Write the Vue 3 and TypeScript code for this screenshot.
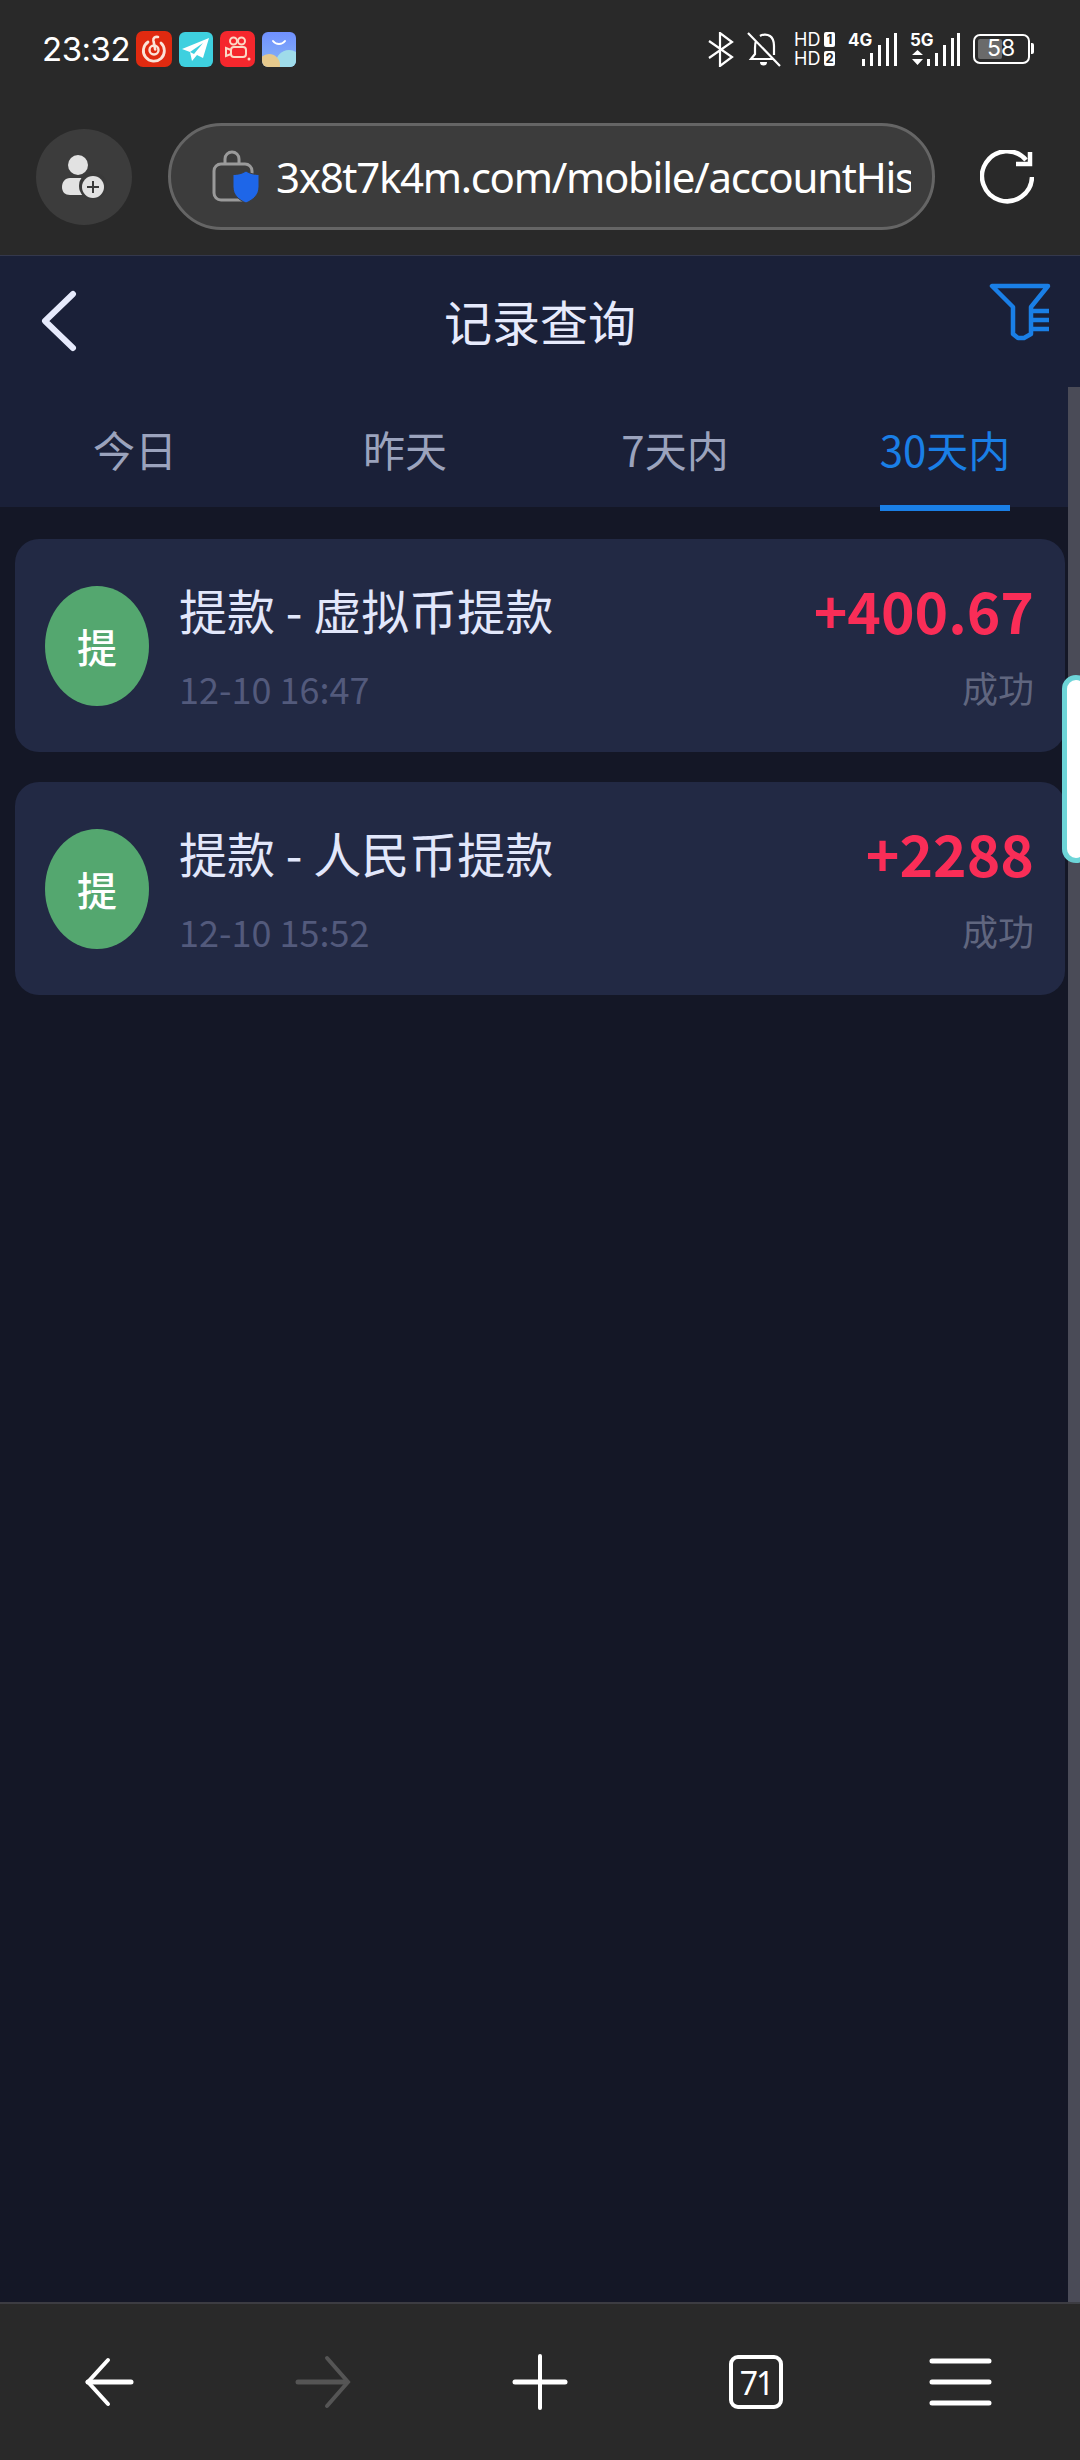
<template>
  <div class="page">
    <div class="chrome">
      <div class="status">
        <span class="time">23:32</span>
        <div class="apps">
          <svg width="36" height="36" viewBox="0 0 36 36">
            <rect width="36" height="36" rx="7" fill="#e02a10" />
            <path d="M22 6c-3-.6-5 1-4.600 3.500l1.800 9" fill="none" stroke="#fbe4d8" stroke-width="2.600" stroke-linecap="round" />
            <path d="M12 11a10.500 10.500 0 1 0 13 1" fill="none" stroke="#fbe4d8" stroke-width="2.800" stroke-linecap="round" />
            <circle cx="18" cy="19" r="4.500" fill="none" stroke="#fbe4d8" stroke-width="2.400" />
          </svg>
          <svg width="34" height="35" viewBox="0 0 34 35">
            <rect width="34" height="35" rx="6" fill="#3ed0df" />
            <path d="M30 6 3 17l8 3 2 9 5-6 6 3z" fill="#fff" />
            <path d="M11 20 24 11l-9 11z" fill="#3ed0df" />
          </svg>
          <svg width="35" height="36" viewBox="0 0 35 36">
            <rect width="35" height="36" rx="7" fill="#f5272d" />
            <g fill="none" stroke="#fbd9c6" stroke-width="2">
              <circle cx="13.500" cy="10" r="3.500" />
              <circle cx="21.500" cy="10" r="3.500" />
              <rect x="11" y="16" width="15" height="10" rx="3" />
              <path d="M11 19 6 17v8l5-2" />
            </g>
            <circle cx="29" cy="28" r="1.500" fill="#fbd9c6" />
          </svg>
          <svg width="34" height="35" viewBox="0 0 34 35">
            <defs>
              <linearGradient id="shopSky" x1="0" y1="0" x2="0" y2="1">
                <stop offset="0" stop-color="#7090ff" />
                <stop offset="1" stop-color="#86b4f5" />
              </linearGradient>
            </defs>
            <clipPath id="shopClip"><rect width="34" height="35" rx="6" /></clipPath>
            <g clip-path="url(#shopClip)">
              <rect width="34" height="35" fill="url(#shopSky)" />
              <circle cx="27" cy="31" r="13" fill="#9fdcea" />
              <circle cx="7" cy="33" r="11" fill="#e6c98c" />
            </g>
            <path d="M11 9c3 4 9 4 12 0" fill="none" stroke="#fff" stroke-width="2" stroke-linecap="round" />
          </svg>
        </div>
        <div class="sys">
          <svg width="26" height="35" viewBox="0 0 26 35" fill="none" stroke="#fff" stroke-width="2.200">
            <path d="M1 9 24 25 12 34V1l12 9L1 26" />
          </svg>
          <svg width="34" height="35" viewBox="0 0 34 35" fill="none" stroke="#fff" stroke-width="2.200">
            <path d="M1 1l32 33M9 9c-1 2-1 4-1 7v6l-4 5h22M13 4c2-1.500 7-2 10 0 3 2 4 6 4 10v9" />
            <path d="M13 30h7a3.500 3.500 0 0 1-7 0z" fill="#fff" stroke="none" />
          </svg>
          <div class="hd">
            <div class="hd-row">HD<b>1</b></div>
            <div class="hd-row">HD<b>2</b></div>
          </div>
          <div class="net">
            <span class="net-label">4G</span>
            <svg width="49" height="34" viewBox="0 0 49 34" fill="#fff">
              <rect x="14" y="27" width="3" height="7" />
              <rect x="22" y="21" width="3" height="13" />
              <rect x="30" y="13" width="3" height="21" />
              <rect x="38" y="6" width="3" height="28" />
              <rect x="46" y="1" width="3" height="33" />
            </svg>
          </div>
          <div class="net">
            <span class="net-label">5G</span>
            <svg width="50" height="34" viewBox="0 0 50 34" fill="#fff">
              <path d="M2 23h11l-5.500-5zM2 27h11l-5.500 6z" />
              <rect x="17" y="27" width="3" height="7" />
              <rect x="25" y="21" width="3" height="13" />
              <rect x="33" y="13" width="3" height="21" />
              <rect x="41" y="6" width="3" height="28" />
              <rect x="47" y="1" width="3" height="33" />
            </svg>
          </div>
          <div class="battery">
            <span class="battery-level" :style="{ width: batteryFill + 'px' }"></span>
            <span class="battery-num">58</span>
          </div>
        </div>
      </div>

      <div class="address">
        <div class="avatar">
          <svg width="46" height="44" viewBox="0 0 46 44">
            <circle cx="17" cy="10" r="10" fill="#e2e2e2" />
            <path d="M9 23h14c4 0 7 1 7 3v14H9c-5 0-8-3-8-8s3-9 8-9z" fill="#e2e2e2" />
            <circle cx="32" cy="31" r="14" fill="#3a3a3a" />
            <circle cx="32" cy="32" r="11" fill="#e2e2e2" />
            <path d="M32 26v12M26 32h12" stroke="#3a3a3a" stroke-width="2" />
          </svg>
        </div>
        <div class="url-box">
          <svg class="lock" width="48" height="54" viewBox="0 0 48 54">
            <path d="M13 14V9a7 7 0 0 1 14 0v5" fill="none" stroke="#9a9a9a" stroke-width="3" />
            <rect x="2" y="14" width="38" height="36" rx="7" fill="none" stroke="#9a9a9a" stroke-width="3" />
            <path d="M34 21c3.500 2.500 8 3.500 13 3.500V37c0 8-6 13-13 16-7-3-13-8-13-16V24.500c5 0 9.500-1 13-3.500z" fill="#1e66e8" stroke="#3c3c3c" stroke-width="1" />
          </svg>
          <span class="url">3x8t7k4m.com/mobile/accountHistory</span>
        </div>
        <svg class="reload" width="54" height="54" viewBox="0 0 54 54" fill="none" stroke="#fff" stroke-width="4.500">
          <path d="M46 10A25 25 0 1 0 52 27" />
          <path d="M50 2v12H36" stroke-width="4.500" />
        </svg>
      </div>
    </div>

    <div class="main">
      <header class="top">
        <div class="title-row">
          <svg class="back" width="40" height="64" viewBox="0 0 40 64" fill="none" stroke="#e6eafc" stroke-width="6" stroke-linecap="round" stroke-linejoin="round">
            <path d="M34 6 6 33l28 27" />
          </svg>
          <h1 class="title">记录查询</h1>
          <svg class="filter" width="64" height="64" viewBox="30 25 64 64" fill="none" stroke="#1a7fe6" stroke-width="4.500">
            <path d="M33 28h56L72 49v27l-7 4h-6l-5-4V49z" stroke-linejoin="round" />
            <path d="M74 53h16M74 62h16M74 71h16" />
          </svg>
        </div>
        <div class="tabs">
          <span v-for="tab in tabs" :key="tab" class="tab" :class="{ active: tab === activeTab }">{{ tab }}</span>
        </div>
      </header>

      <section class="list">
        <article v-for="item in records" :key="item.title" class="card">
          <div class="badge">提</div>
          <div class="info">
            <p class="name">{{ item.title }}</p>
            <p class="date">{{ item.time }}</p>
          </div>
          <div class="right">
            <p class="amount">{{ item.amount }}</p>
            <p class="state">{{ item.state }}</p>
          </div>
        </article>
      </section>

      <div class="scrollbar"></div>
      <div class="float-tab"></div>
    </div>

    <nav class="bottom">
      <svg width="216" height="156" viewBox="0 0 216 156" fill="none" stroke="#fff" stroke-linecap="round">
        <path d="M108 56 88 78l20 22" stroke-width="4" />
        <path d="M88 78h43" stroke-width="5" />
      </svg>
      <svg width="216" height="156" viewBox="0 0 216 156" fill="none" stroke="#555" stroke-linecap="round">
        <path d="M111 54l21 24-21 24" stroke-width="4" />
        <path d="M82 78h48" stroke-width="5" />
      </svg>
      <svg width="216" height="156" viewBox="0 0 216 156" fill="none" stroke="#fff" stroke-linecap="round">
        <path d="M108 52v52" stroke-width="4" />
        <path d="M83 78h50" stroke-width="5" />
      </svg>
      <div class="tabs-count"><span>71</span></div>
      <svg width="216" height="156" viewBox="0 0 216 156" stroke="#fff" stroke-width="5" stroke-linecap="round">
        <path d="M68 57h57M68 78h57M68 99h57" />
      </svg>
    </nav>
  </div>
</template>

<script setup lang="ts">
interface RecordItem {
  title: string
  time: string
  amount: string
  state: string
}

const tabs: string[] = ['今日', '昨天', '7天内', '30天内']
const activeTab = '30天内'
const batteryFill = 24

const records: RecordItem[] = [
  { title: '提款 - 虚拟币提款', time: '12-10 16:47', amount: '+400.67', state: '成功' },
  { title: '提款 - 人民币提款', time: '12-10 15:52', amount: '+2288', state: '成功' },
]
</script>

<style>
html,
body {
  margin: 0;
  background: #141726;
}
</style>

<style scoped>
.page {
  width: 1080px;
  height: 2460px;
  display: flex;
  flex-direction: column;
  overflow: hidden;
  font-family: "Noto Sans CJK SC", "Noto Sans", sans-serif;
}
.chrome {
  height: 255px;
  background: #292929;
  flex-shrink: 0;
  border-bottom: 1px solid #34384c;
}
.status {
  height: 98px;
  display: flex;
  align-items: center;
  padding: 0 47px 0 42px;
}
.time {
  font-family: "Inter", "Noto Sans", sans-serif;
  font-size: 33px;
  letter-spacing: -0.5px;
  color: #fff;
  width: 94px;
}
.apps {
  display: flex;
  align-items: center;
  gap: 7px;
}
.sys {
  margin-left: auto;
  display: flex;
  align-items: center;
  gap: 13px;
}
.hd {
  width: 41px;
  font-family: "Inter", "Liberation Sans", sans-serif;
  font-size: 18px;
  line-height: 19px;
  color: #fff;
}
.hd-row {
  display: flex;
  justify-content: space-between;
  align-items: center;
}
.hd-row b {
  background: #fff;
  color: #292929;
  width: 11px;
  height: 15px;
  border-radius: 2px;
  font-size: 13px;
  line-height: 15px;
  text-align: center;
}
.net {
  position: relative;
  height: 34px;
}
.net svg {
  display: block;
}
.net-label {
  position: absolute;
  left: 0;
  top: -2px;
  font-family: "Inter", "Liberation Sans", sans-serif;
  font-size: 17px;
  font-weight: 700;
  line-height: 20px;
  color: #fff;
}
.battery {
  position: relative;
  width: 57px;
  height: 30px;
  box-sizing: border-box;
  border: 2.500px solid #fff;
  border-radius: 7px;
  margin-right: 3px;
}
.battery::after {
  content: "";
  position: absolute;
  right: -6px;
  top: 7px;
  width: 3px;
  height: 11px;
  background: #fff;
  border-radius: 0 2px 2px 0;
}
.battery-level {
  position: absolute;
  left: 3px;
  top: 3px;
  bottom: 3px;
  background: #6a6a6a;
  border-radius: 2px;
}
.battery-num {
  position: absolute;
  left: 12px;
  top: 0;
  font-family: "Inter", "Noto Sans", sans-serif;
  font-size: 23px;
  line-height: 25px;
  color: #fff;
}
.address {
  height: 157px;
  display: flex;
  align-items: center;
  padding: 0 45px 0 36px;
}
.avatar {
  width: 96px;
  height: 96px;
  border-radius: 50%;
  background: #3c3c3c;
  display: flex;
  align-items: center;
  justify-content: center;
  flex-shrink: 0;
}
.url-box {
  width: 767px;
  height: 107px;
  margin-left: 36px;
  box-sizing: border-box;
  border: 3px solid #656565;
  border-radius: 54px;
  background: #3c3c3c;
  display: flex;
  align-items: center;
  padding: 0 21px 0 41px;
  flex-shrink: 0;
}
.lock {
  flex-shrink: 0;
}
.url {
  margin-left: 16px;
  font-family: "Noto Sans", sans-serif;
  font-size: 42px;
  letter-spacing: -1.300px;
  color: #fff;
  white-space: nowrap;
  overflow: hidden;
}
.reload {
  margin-left: 45px;
  flex-shrink: 0;
}
.main {
  position: relative;
  flex: 1;
  background: #141726;
  min-height: 0;
}
.top {
  background: #1a2038;
  height: 251px;
}
.title-row {
  height: 128px;
  display: grid;
  grid-template-columns: 1fr auto 1fr;
  align-items: center;
  padding: 0 27px 0 39px;
  box-sizing: border-box;
}
.filter {
  justify-self: end;
  align-self: start;
  margin-top: 27px;
}
.title {
  margin: 0;
  font-size: 48px;
  font-weight: 400;
  color: #e6eafc;
  transform: translateX(-6px);
}
.tabs {
  display: grid;
  grid-template-columns: repeat(4, 1fr);
  grid-template-rows: 123px;
}
.tab {
  justify-self: center;
  position: relative;
  height: 123px;
  font-size: 42px;
  line-height: 130px;
  color: #9ba3bd;
}
.tab.active {
  color: #1a7fe6;
}
.tab.active::after {
  content: "";
  position: absolute;
  left: 0;
  right: 0;
  bottom: -4px;
  height: 6px;
  background: #1a7fe6;
}
.list {
  padding: 32px 15px 0;
  display: flex;
  flex-direction: column;
  gap: 30px;
}
.card {
  height: 213px;
  box-sizing: border-box;
  background: #222944;
  border-radius: 24px;
  display: flex;
  align-items: center;
  padding: 0 31px 0 30px;
}
.badge {
  width: 104px;
  height: 120px;
  border-radius: 50%;
  background: #54a76f;
  color: #fff;
  font-size: 40px;
  font-weight: 500;
  display: flex;
  align-items: center;
  justify-content: center;
  flex-shrink: 0;
}
.info {
  margin-left: 30px;
  flex: 1;
}
.name {
  margin: 0;
  font-size: 48px;
  line-height: 60px;
  color: #e2e7fb;
  white-space: pre;
}
.date {
  margin: 24px 0 0;
  font-size: 36px;
  line-height: 50px;
  color: #535a7c;
}
.right {
  text-align: right;
}
.amount {
  margin: 0;
  font-size: 57px;
  font-weight: 700;
  line-height: 60px;
  color: #f92d57;
}
.state {
  margin: 23px 0 0;
  font-size: 36px;
  line-height: 50px;
  color: #60667f;
}
.scrollbar {
  position: absolute;
  right: 0;
  top: 131px;
  bottom: 0;
  width: 12px;
  background: #4a4b57;
}
.float-tab {
  position: absolute;
  right: -10px;
  top: 419px;
  width: 28px;
  height: 188px;
  box-sizing: border-box;
  background: #fff;
  border: 5px solid #6dd5d8;
  border-radius: 22px;
}
.bottom {
  height: 156px;
  flex-shrink: 0;
  background: #292929;
  border-top: 2px solid #3c3c42;
  display: grid;
  grid-template-columns: repeat(5, 216px);
  align-items: center;
}
.bottom svg {
  display: block;
}
.tabs-count {
  justify-self: center;
  width: 54px;
  height: 54px;
  box-sizing: border-box;
  border: 4px solid #fff;
  border-radius: 9px;
  display: flex;
  align-items: center;
  justify-content: center;
  font-family: "Noto Sans", sans-serif;
  font-size: 32px;
  letter-spacing: -2px;
  color: #fff;
}
</style>
